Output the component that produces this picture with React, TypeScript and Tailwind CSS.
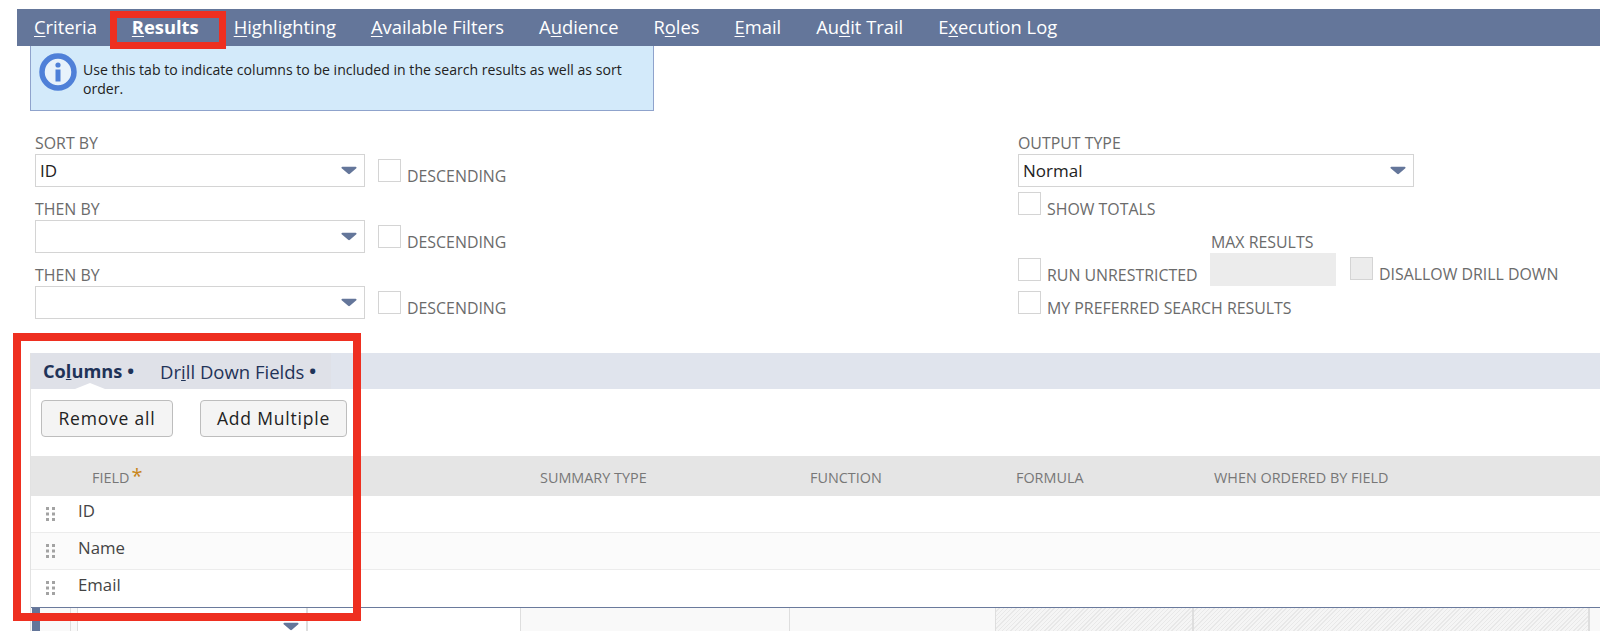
const TABS = [
  { pre: "", key: "C", post: "riteria" },
  { pre: "", key: "R", post: "esults", active: true },
  { pre: "", key: "H", post: "ighlighting" },
  { pre: "", key: "A", post: "vailable Filters" },
  { pre: "A", key: "u", post: "dience" },
  { pre: "R", key: "o", post: "les" },
  { pre: "", key: "E", post: "mail" },
  { pre: "Au", key: "d", post: "it Trail" },
  { pre: "E", key: "x", post: "ecution Log" },
];

function Caret() {
  return (
    <svg width="16" height="9" viewBox="0 0 17 9" className="shrink-0">
      <path d="M1.5 0.5h14c.9 0 1.3.9.8 1.5L9.5 8c-.5.5-1.4.5-1.9 0L.7 2C.2 1.4.6.5 1.5.5z" fill="#64769a" />
    </svg>
  );
}

function Select({ value, width }: { value?: string; width: string }) {
  return (
    <div className={`${width} h-[33px] flex items-center justify-between pl-[4px] pr-[7px] bg-white border border-[#d4d4d4] text-[17px] text-[#222]`}>
      <span>{value}</span>
      <Caret />
    </div>
  );
}

function Check({ label, disabled }: { label: string; disabled?: boolean }) {
  return (
    <div className="flex items-end gap-[6px]">
      <div className={`w-[23px] h-[23px] border border-[#d4d4d4] ${disabled ? "bg-[#ececec]" : "bg-white"}`} />
      <span className="text-[15.9px] leading-4 -mb-[2px] text-[#6b6b6b] whitespace-nowrap">{label}</span>
    </div>
  );
}

function Label({ children }: { children: string }) {
  return <div className="h-[19px] mb-px text-[15.9px] leading-[19px] text-[#6b6b6b] whitespace-nowrap">{children}</div>;
}

function Grip() {
  return (
    <svg width="9" height="14" viewBox="0 0 9 14" className="fill-[#a3a3a3]">
      <rect x="0" y="0" width="3" height="3" />
      <rect x="6" y="0" width="3" height="3" />
      <rect x="0" y="5.5" width="3" height="3" />
      <rect x="6" y="5.5" width="3" height="3" />
      <rect x="0" y="11" width="3" height="3" />
      <rect x="6" y="11" width="3" height="3" />
    </svg>
  );
}

const ROWS = ["ID", "Name", "Email"];

export default function App() {
  return (
    <div className="relative w-[1600px] h-[631px] overflow-hidden bg-white pt-[9px] font-['Open_Sans',sans-serif]">
      {/* Main tab bar */}
      <div className="ml-[17px] h-[37px] bg-[#64769a] flex items-center pl-[17px] gap-[35px] text-[18.35px] text-white">
        {TABS.map((t) => (
          <div key={t.post} className={`relative h-full flex items-center pb-[1px] whitespace-nowrap ${t.active ? "font-bold" : ""}`}>
            {t.pre}
            <u className="underline-offset-2">{t.key}</u>
            {t.post}
            {t.active && <span className="absolute bottom-0 left-1/2 -translate-x-1/2 w-0 h-0 border-x-[5px] border-x-transparent border-b-[4px] border-b-white" />}
          </div>
        ))}
      </div>

      {/* Info banner */}
      <div className="ml-[30px] w-[624px] h-[65px] bg-[#d3eafa] border border-t-0 border-[#8fa3cc] flex items-start pl-[8px] pt-[7px] gap-[6px]">
        <svg width="38" height="38" viewBox="0 0 38 38" className="shrink-0">
          <circle cx="19" cy="19" r="16" fill="#e8f2fb" stroke="#4f80d8" strokeWidth="5.5" />
          <circle cx="19" cy="12" r="2.6" fill="#4f80d8" />
          <rect x="16.5" y="16.5" width="5" height="12" fill="#4f80d8" />
        </svg>
        <p className="text-[14.08px] leading-[19px] text-[#222] w-[550px] mt-[7px]">
          Use this tab to indicate columns to be included in the search results as well as sort order.
        </p>
      </div>

      {/* Sort options */}
      <div className="flex mt-[23px] ml-[35px] h-[185px]">
        <div className="w-[983px] flex flex-col gap-[13px]">
          {[
            { label: "SORT BY", value: "ID" },
            { label: "THEN BY", value: "" },
            { label: "THEN BY", value: "" },
          ].map((s, i) => (
            <div key={i}>
              <Label>{s.label}</Label>
              <div className="flex items-start gap-[13px]">
                <Select value={s.value} width="w-[330px]" />
                <div className="mt-[5px]">
                  <Check label="DESCENDING" />
                </div>
              </div>
            </div>
          ))}
        </div>
        <div className="flex flex-col">
          <Label>OUTPUT TYPE</Label>
          <Select value="Normal" width="w-[396px]" />
          <div className="mt-[5px]">
            <Check label="SHOW TOTALS" />
          </div>
          <div className="flex items-end mt-[18px]">
            <div className="w-[192px] mb-[5px]">
              <Check label="RUN UNRESTRICTED" />
            </div>
            <div className="w-[126px]">
              <div className="pl-px">
                <Label>MAX RESULTS</Label>
              </div>
              <div className="h-[33px] bg-[#ececec]" />
            </div>
            <div className="ml-[14px] mb-[6px]">
              <Check label="DISALLOW DRILL DOWN" disabled />
            </div>
          </div>
          <div className="mt-[5px]">
            <Check label="MY PREFERRED SEARCH RESULTS" />
          </div>
        </div>
      </div>

      {/* Columns panel */}
      <div className="mt-[34px] ml-[30px] border-l border-[#e2e2e2]">
        <div className="h-[36px] bg-[#e0e4ed]">
          <div className="relative w-[300px] h-full bg-[#dfe1e8] flex items-center pl-[12px] pt-[1px] text-[18.2px] text-[#1f3358] whitespace-nowrap">
            <span className="font-bold">Co<u>l</u>umns</span>
            <span className="ml-[5px] font-bold">•</span>
            <span className="ml-[26px] text-[18.5px]">Dr<u>i</u>ll Down Fields</span>
            <span className="ml-[5px] font-bold">•</span>
            <span className="absolute bottom-0 left-[44px] w-0 h-0 border-x-[15px] border-x-transparent border-b-[6px] border-b-white" />
          </div>
        </div>
        <div className="h-[67px] flex items-start pt-[11px] pl-[10px] gap-[27px]">
          <button className="w-[132px] h-[37px] bg-[#f4f4f4] border border-[#bdbdbd] rounded-[4px] text-[17.5px] font-medium tracking-[0.8px] text-[#222]">Remove all</button>
          <button className="w-[147px] h-[37px] bg-[#f4f4f4] border border-[#bdbdbd] rounded-[4px] text-[17.5px] font-medium tracking-[0.8px] text-[#222]">Add Multiple</button>
        </div>
        <div className="h-[40px] pt-[3px] bg-[#e5e5e5] flex items-center text-[14.4px] text-[#777]">
          <div className="w-[489px] pl-[61px] flex items-center">
            FIELD<span className="ml-[2px] -mt-[3px] text-[20px] leading-none text-[#c9851a]">*</span>
          </div>
          <div className="w-[270px] pl-[20px]">SUMMARY TYPE</div>
          <div className="w-[206px] pl-[20px]">FUNCTION</div>
          <div className="w-[198px] pl-[20px]">FORMULA</div>
          <div className="pl-[20px]">WHEN ORDERED BY FIELD</div>
        </div>
        {ROWS.map((r, i) => (
          <div key={r} className={`h-[37px] flex items-center border-b ${i === 2 ? "border-transparent" : "border-[#ececec]"} ${i === 1 ? "bg-[#fbfbfb]" : "bg-white"}`}>
            <div className="w-[47px] pl-[15px] flex">
              <Grip />
            </div>
            <span className="text-[16.8px] text-[#444] -mt-[6px]">{r}</span>
          </div>
        ))}
        {/* Edit row */}
        <div className="h-[30px] flex border-t border-[#6a7a9c] bg-[#f9f9f9]">
          <div className="w-[8px] ml-px bg-[#64769a]" />
          <div className="w-[31px] border-r border-[#dedede]" />
          <div className="w-[237px] pl-[6px] border-r border-[#dedede] flex">
            <div className="w-[230px] h-full bg-white border-x border-[#dedede] flex justify-end pr-[7px] pt-[14px]">
              <Caret />
            </div>
          </div>
          <div className="w-[213px] bg-white border-r border-[#dedede]" />
          <div className="w-[269px] border-r border-[#dedede]" />
          <div className="w-[206px] border-r border-[#dedede]" />
          <div className="w-[198px] border-r-2 border-[#dedede] bg-[repeating-linear-gradient(135deg,#f5f5f5_0,#f5f5f5_2px,#e8e8e8_2px,#e8e8e8_3px)]" />
          <div className="w-[396px] border-r-2 border-[#dedede] bg-[repeating-linear-gradient(135deg,#f5f5f5_0,#f5f5f5_2px,#e8e8e8_2px,#e8e8e8_3px)]" />
        </div>
      </div>

      {/* Annotation boxes */}
      <div className="absolute left-[110px] top-[11px] w-[116px] h-[38px] border-[7px] border-[#ee2f20]" />
      <div className="absolute left-[13px] top-[333px] w-[348px] h-[288px] border-8 border-[#ee2f20]" />
    </div>
  );
}
